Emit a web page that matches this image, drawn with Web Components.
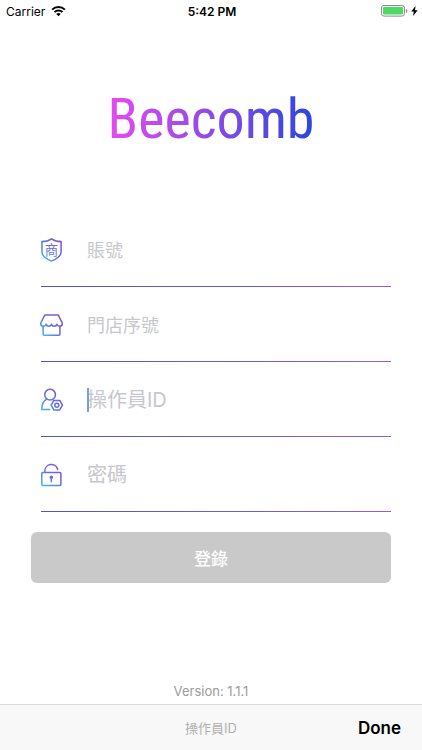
<!DOCTYPE html>
<html lang="zh-Hant">
<head>
<meta charset="utf-8">
<meta name="viewport" content="width=device-width, initial-scale=1">
<title>Beecomb</title>
<style>
  html, body {
    margin: 0;
    height: 100%;
  }

  body {
    background: #fff;
    font-family: Inter, "Noto Sans CJK TC", sans-serif;
  }
</style>
</head>
<body>
<login-page>
  <status-bar slot="status" carrier="Carrier" time="5:42 PM"></status-bar>
  <brand-logo slot="logo">Beecomb</brand-logo>
  <login-field icon="shield" name="account" label="賬號" size="medium"></login-field>
  <login-field icon="store" name="store" label="門店序號" size="medium"></login-field>
  <login-field icon="operator" name="operator" label="操作員ID" size="large" active></login-field>
  <login-field icon="lock" name="password" label="密碼" size="large" type="password"></login-field>
  <login-button slot="action">登錄</login-button>
  <span slot="version">Version: 1.1.1</span>
  <keyboard-toolbar slot="toolbar" action="Done">操作員ID</keyboard-toolbar>
</login-page>

<script>
class LoginPage extends HTMLElement {
  constructor() {
    super();
    this.attachShadow({ mode: 'open' });
    this.shadowRoot.innerHTML = `
      <style>
        :host {
          display: flex;
          flex-direction: column;
          min-height: 100vh;
        }

        header {
          display: flex;
          justify-content: center;
          padding: 62px 20px 58px;
        }

        form {
          padding: 0 31px;
        }

        .fields {
          display: grid;
          padding-left: 10px;
        }

        .action {
          padding-top: 20px;
        }

        footer {
          margin-top: auto;
          padding-bottom: 4px;
          color: #9b9b9b;
          font-size: 13px;
          line-height: 18px;
          text-align: center;
        }
      </style>
      <slot name="status"></slot>
      <header><slot name="logo"></slot></header>
      <form>
        <div class="fields"><slot></slot></div>
        <div class="action"><slot name="action"></slot></div>
      </form>
      <footer><slot name="version"></slot></footer>
      <slot name="toolbar"></slot>
    `;
  }
}

class StatusBar extends HTMLElement {
  constructor() {
    super();
    this.attachShadow({ mode: 'open' });
    this.shadowRoot.innerHTML = `
      <style>
        :host {
          display: grid;
          grid-template-columns: 1fr auto 1fr;
          align-items: center;
          height: 22px;
          padding: 0 4px 0 6px;
          color: #000;
          font-size: 12px;
        }

        div {
          display: flex;
          align-items: center;
          gap: 6px;
        }

        .power {
          justify-content: flex-end;
          gap: 3px;
        }

        .time {
          font-weight: 600;
        }

        svg {
          display: block;
        }
      </style>
      <div>
        <span class="carrier"></span>
        <svg width="15" height="12" viewBox="0 0 16 12" fill="none" stroke="#000" stroke-width="2">
          <path d="M1.2 4.6a9.6 9.6 0 0 1 13.6 0"/>
          <path d="M3.7 7.2a6.1 6.1 0 0 1 8.6 0"/>
          <path d="M8 11.6 5.6 9.2a3.4 3.4 0 0 1 4.8 0z" fill="#000" stroke="none"/>
        </svg>
      </div>
      <span class="time"></span>
      <div class="power">
        <svg width="27" height="12" viewBox="0 0 27 12">
          <rect x=".5" y=".5" width="23" height="10.6" rx="2.6" fill="#fff" stroke="#8c8c8c"/>
          <rect x="2" y="2" width="20" height="7.6" rx="1.3" fill="#4cd964"/>
          <path d="M25 4v4q1.4-.6 1.4-2T25 4z" fill="#8c8c8c"/>
        </svg>
        <svg width="7" height="10" viewBox="0 0 7 10"><path d="M4.6 0 .2 5.6h2.6L2 10l4.7-5.8H4z"/></svg>
      </div>
    `;
  }

  connectedCallback() {
    this.shadowRoot.querySelector('.carrier').textContent = this.getAttribute('carrier');
    this.shadowRoot.querySelector('.time').textContent = this.getAttribute('time');
  }
}

class BrandLogo extends HTMLElement {
  constructor() {
    super();
    this.attachShadow({ mode: 'open' });
    this.shadowRoot.innerHTML = `
      <style>
        :host {
          display: block;
        }

        h1 {
          margin: 0;
          background: linear-gradient(90deg, #e64bf0, #8c4be4 50%, #2a46e0);
          -webkit-background-clip: text;
          background-clip: text;
          color: transparent;
          font: 400 56px/70px "Roboto Condensed", "Liberation Sans Narrow", Roboto, sans-serif;
        }
      </style>
      <h1><slot></slot></h1>
    `;
  }
}

const ICONS = {
  shield: `
    <path d="M12 .8c2.8 2 6 2.900 10 2.900v11c0 4.600-4.200 7-10 9.500-5.800-2.500-10-4.900-10-9.500v-11c4 0 7.200-.9 10-2.900z"/>
    <text x="12" y="17.500" text-anchor="middle" font-size="14" font-family="Noto Sans CJK TC, sans-serif" fill="url(#tint)" stroke="none">商</text>`,
  store: `
    <path d="M5 2h14l4.300 8.700a2.900 2.900 0 0 1-5.700 1 2.900 2.900 0 0 1-5.600 0 2.900 2.900 0 0 1-5.600 0 2.900 2.900 0 0 1-5.700-1z"/>
    <path d="M3.200 14v8.200q0 1 1 1h15.600q1 0 1-1V14"/>`,
  operator: `
    <circle cx="10.500" cy="7" r="5.600"/>
    <path d="M7 11.700C3.500 13.500 1.800 17 1.800 22.500H10"/>
    <path d="m11.600 18 2.800-5h6.200l2.800 5-2.800 5h-6.200z"/>
    <circle cx="17.500" cy="18" r="2.100"/>`,
  lock: `
    <rect x="1.800" y="10" width="20" height="13.500" rx="1"/>
    <path d="M5 10V8.300a6.800 6.800 0 0 1 13.400-1.500"/>
    <path d="M11.800 15.500v4"/>
    <circle cx="11.800" cy="15" r="1.100" fill="url(#tint)"/>`
};

class FieldIcon extends HTMLElement {
  static get observedAttributes() {
    return ['name'];
  }

  constructor() {
    super();
    this.attachShadow({ mode: 'open' });
  }

  attributeChangedCallback() {
    this.shadowRoot.innerHTML = `
      <style>
        :host {
          display: block;
          width: 22px;
        }

        svg {
          display: block;
          width: 100%;
          overflow: visible;
        }
      </style>
      <svg viewBox="1 0 23 25" fill="none" stroke="url(#tint)" stroke-width="1.6" stroke-linejoin="round" stroke-linecap="round" aria-hidden="true">
        <defs>
          <linearGradient id="tint" gradientUnits="userSpaceOnUse" x1="2" y1="22" x2="21" y2="3">
            <stop offset="0" stop-color="#45b4ee"/>
            <stop offset=".5" stop-color="#6470dc"/>
            <stop offset="1" stop-color="#8a4be0"/>
          </linearGradient>
        </defs>
        ${ICONS[this.getAttribute('name')] || ''}
      </svg>
    `;
  }
}

class LoginField extends HTMLElement {
  constructor() {
    super();
    this.attachShadow({ mode: 'open' });
    this.shadowRoot.innerHTML = `
      <style>
        :host {
          display: flex;
          flex-direction: column;
          height: 75px;
        }

        label {
          display: flex;
          flex: 1;
          align-items: center;
          gap: 24px;
          padding-top: 2px;
        }

        .control {
          position: relative;
          flex: 1;
          min-width: 0;
        }

        input {
          display: block;
          box-sizing: border-box;
          width: 100%;
          height: 30px;
          margin: 0;
          padding: 0;
          border: 0;
          outline: 0;
          background: none;
          color: #333;
          font-family: inherit;
          font-size: 18px;
        }

        :host([size="large"]) input {
          font-size: 20px;
        }

        input::placeholder {
          color: #c7c7cd;
          opacity: 1;
        }

        .caret {
          display: none;
          position: absolute;
          top: 3px;
          left: 0;
          width: 2px;
          height: 24px;
          background: #7c9ae2;
        }

        :host([active]) .caret {
          display: block;
        }

        .line {
          height: 1px;
          background: linear-gradient(90deg, #4a58c8, #9460c8);
        }
      </style>
      <label>
        <field-icon></field-icon>
        <span class="control"><input><span class="caret"></span></span>
      </label>
      <div class="line"></div>
    `;
  }

  connectedCallback() {
    const input = this.shadowRoot.querySelector('input');
    input.type = this.getAttribute('type') || 'text';
    input.name = this.getAttribute('name');
    input.placeholder = this.getAttribute('label');
    input.setAttribute('aria-label', this.getAttribute('label'));
    this.shadowRoot.querySelector('field-icon').setAttribute('name', this.getAttribute('icon'));
  }
}

class LoginButton extends HTMLElement {
  constructor() {
    super();
    this.attachShadow({ mode: 'open' });
    this.shadowRoot.innerHTML = `
      <style>
        :host {
          display: block;
        }

        button {
          width: 100%;
          height: 51px;
          padding: 0;
          border: 0;
          border-radius: 6px;
          background: #c9c9c9;
          color: #fff;
          font-family: inherit;
          font-size: 17px;
          font-weight: 500;
        }
      </style>
      <button type="button"><slot></slot></button>
    `;
  }
}

class KeyboardToolbar extends HTMLElement {
  constructor() {
    super();
    this.attachShadow({ mode: 'open' });
    this.shadowRoot.innerHTML = `
      <style>
        :host {
          display: grid;
          grid-template-columns: 1fr auto 1fr;
          align-items: center;
          height: 45px;
          padding: 0 21px;
          border-top: 1px solid #dcdcdc;
          background: #f8f8f8;
        }

        span {
          grid-column: 2;
          color: #b0b0b0;
          font-size: 13px;
        }

        button {
          justify-self: end;
          padding: 0;
          border: 0;
          background: none;
          color: #000;
          font-family: inherit;
          font-size: 17px;
          font-weight: 600;
        }
      </style>
      <span><slot></slot></span>
      <button type="button"></button>
    `;
  }

  connectedCallback() {
    this.shadowRoot.querySelector('button').textContent = this.getAttribute('action');
  }
}

customElements.define('field-icon', FieldIcon);
customElements.define('status-bar', StatusBar);
customElements.define('brand-logo', BrandLogo);
customElements.define('login-field', LoginField);
customElements.define('login-button', LoginButton);
customElements.define('keyboard-toolbar', KeyboardToolbar);
customElements.define('login-page', LoginPage);
</script>
</body>
</html>
